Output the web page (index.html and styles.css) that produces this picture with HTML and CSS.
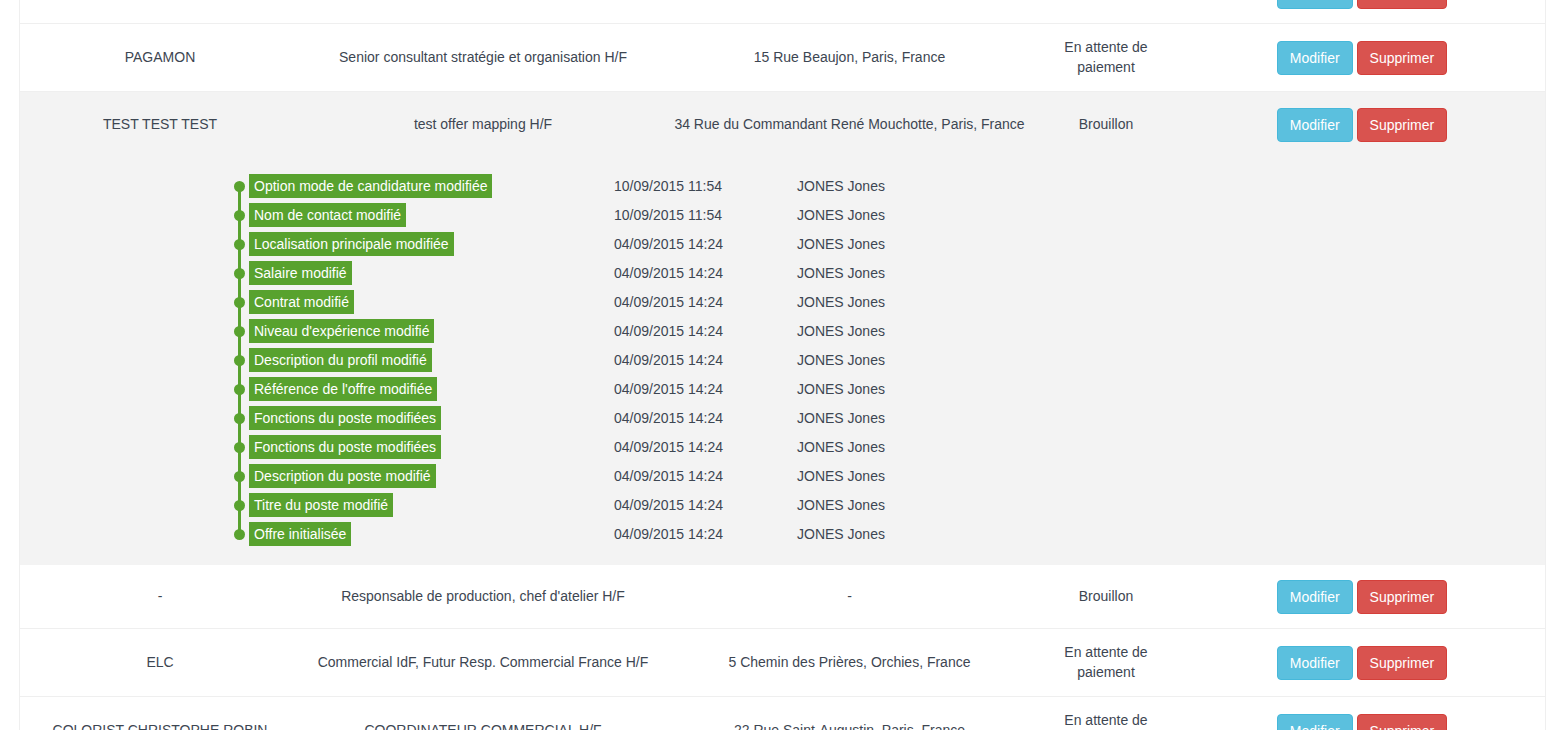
FILE: index.html
```html
<!DOCTYPE html>
<html lang="fr">
<head>
<meta charset="utf-8">
<title>Offres</title>
<link rel="stylesheet" href="styles.css">
</head>
<body>
<div class="list">
  <div class="row">
    <div class="cell">ACME</div>
    <div class="cell">Chargé de recrutement H/F</div>
    <div class="cell">10 Rue de Rivoli, Paris, France</div>
    <div class="cell">Publiée</div>
    <div class="cell"><div class="actions"><a class="btn btn-info">Modifier</a><a class="btn btn-danger">Supprimer</a></div></div>
  </div>
  <div class="row">
    <div class="cell">PAGAMON</div>
    <div class="cell">Senior consultant stratégie et organisation H/F</div>
    <div class="cell">15 Rue Beaujon, Paris, France</div>
    <div class="cell">En attente de paiement</div>
    <div class="cell"><div class="actions"><a class="btn btn-info">Modifier</a><a class="btn btn-danger">Supprimer</a></div></div>
  </div>
  <div class="row-group active">
    <div class="row no-border">
      <div class="cell">TEST TEST TEST</div>
      <div class="cell">test offer mapping H/F</div>
      <div class="cell">34 Rue du Commandant René Mouchotte, Paris, France</div>
      <div class="cell">Brouillon</div>
      <div class="cell"><div class="actions"><a class="btn btn-info">Modifier</a><a class="btn btn-danger">Supprimer</a></div></div>
    </div>
    <div class="history">
      <div class="tl-item"><span class="tl-marker"></span><span class="tl-label-cell"><span class="tl-label">Option mode de candidature modifiée</span></span><span class="tl-date">10/09/2015 11:54</span><span class="tl-user">JONES Jones</span></div>
      <div class="tl-item"><span class="tl-marker"></span><span class="tl-label-cell"><span class="tl-label">Nom de contact modifié</span></span><span class="tl-date">10/09/2015 11:54</span><span class="tl-user">JONES Jones</span></div>
      <div class="tl-item"><span class="tl-marker"></span><span class="tl-label-cell"><span class="tl-label">Localisation principale modifiée</span></span><span class="tl-date">04/09/2015 14:24</span><span class="tl-user">JONES Jones</span></div>
      <div class="tl-item"><span class="tl-marker"></span><span class="tl-label-cell"><span class="tl-label">Salaire modifié</span></span><span class="tl-date">04/09/2015 14:24</span><span class="tl-user">JONES Jones</span></div>
      <div class="tl-item"><span class="tl-marker"></span><span class="tl-label-cell"><span class="tl-label">Contrat modifié</span></span><span class="tl-date">04/09/2015 14:24</span><span class="tl-user">JONES Jones</span></div>
      <div class="tl-item"><span class="tl-marker"></span><span class="tl-label-cell"><span class="tl-label">Niveau d'expérience modifié</span></span><span class="tl-date">04/09/2015 14:24</span><span class="tl-user">JONES Jones</span></div>
      <div class="tl-item"><span class="tl-marker"></span><span class="tl-label-cell"><span class="tl-label">Description du profil modifié</span></span><span class="tl-date">04/09/2015 14:24</span><span class="tl-user">JONES Jones</span></div>
      <div class="tl-item"><span class="tl-marker"></span><span class="tl-label-cell"><span class="tl-label">Référence de l'offre modifiée</span></span><span class="tl-date">04/09/2015 14:24</span><span class="tl-user">JONES Jones</span></div>
      <div class="tl-item"><span class="tl-marker"></span><span class="tl-label-cell"><span class="tl-label">Fonctions du poste modifiées</span></span><span class="tl-date">04/09/2015 14:24</span><span class="tl-user">JONES Jones</span></div>
      <div class="tl-item"><span class="tl-marker"></span><span class="tl-label-cell"><span class="tl-label">Fonctions du poste modifiées</span></span><span class="tl-date">04/09/2015 14:24</span><span class="tl-user">JONES Jones</span></div>
      <div class="tl-item"><span class="tl-marker"></span><span class="tl-label-cell"><span class="tl-label">Description du poste modifié</span></span><span class="tl-date">04/09/2015 14:24</span><span class="tl-user">JONES Jones</span></div>
      <div class="tl-item"><span class="tl-marker"></span><span class="tl-label-cell"><span class="tl-label">Titre du poste modifié</span></span><span class="tl-date">04/09/2015 14:24</span><span class="tl-user">JONES Jones</span></div>
      <div class="tl-item"><span class="tl-marker"></span><span class="tl-label-cell"><span class="tl-label">Offre initialisée</span></span><span class="tl-date">04/09/2015 14:24</span><span class="tl-user">JONES Jones</span></div>
    </div>
  </div>
  <div class="row">
    <div class="cell">-</div>
    <div class="cell">Responsable de production, chef d'atelier H/F</div>
    <div class="cell">-</div>
    <div class="cell">Brouillon</div>
    <div class="cell"><div class="actions"><a class="btn btn-info">Modifier</a><a class="btn btn-danger">Supprimer</a></div></div>
  </div>
  <div class="row">
    <div class="cell">ELC</div>
    <div class="cell">Commercial IdF, Futur Resp. Commercial France H/F</div>
    <div class="cell">5 Chemin des Prières, Orchies, France</div>
    <div class="cell">En attente de paiement</div>
    <div class="cell"><div class="actions"><a class="btn btn-info">Modifier</a><a class="btn btn-danger">Supprimer</a></div></div>
  </div>
  <div class="row">
    <div class="cell">COLORIST CHRISTOPHE ROBIN</div>
    <div class="cell">COORDINATEUR COMMERCIAL H/F</div>
    <div class="cell">22 Rue Saint-Augustin, Paris, France</div>
    <div class="cell">En attente de paiement</div>
    <div class="cell"><div class="actions"><a class="btn btn-info">Modifier</a><a class="btn btn-danger">Supprimer</a></div></div>
  </div>
</div>
</body>
</html>
```
FILE: styles.css
```css
html, body {
  margin: 0;
  padding: 0;
  background: #ffffff;
}
body {
  font-family: "Liberation Sans", Arial, sans-serif;
  font-size: 14px;
  line-height: 20px;
  color: #3d4652;
}
.list {
  width: 1525px;
  margin: -40px 0 0 19px;
  border-left: 1px solid #efefef;
  border-right: 1px solid #efefef;
  background: #ffffff;
}
.row {
  display: grid;
  grid-template-columns: 280px 366px 367px 146px 1fr;
  align-items: center;
  border-bottom: 1px solid #efefef;
}
.row.no-border {
  border-bottom: none;
}
.row-group.active {
  background: #f3f3f3;
  border-bottom: 1px solid #f3f3f3;
}
.cell {
  padding: 13px 8px 14px;
  text-align: center;
}
.row-group.active .cell {
  padding-top: 14px;
}
.actions {
  display: flex;
  justify-content: center;
  gap: 4px;
  padding: 2px 0 0;
}
.btn {
  display: block;
  padding: 6px 12px;
  line-height: 20px;
  border: 1px solid transparent;
  border-radius: 4px;
  color: #ffffff;
  font-size: 14px;
  cursor: pointer;
}
.btn-info {
  background: #5bc0de;
  border-color: #46b8da;
}
.btn-danger {
  background: #d9534f;
  border-color: #d43f3a;
}
.history {
  padding: 18px 0 18px 209px;
}
.tl-item {
  display: grid;
  grid-template-columns: 20px 365px 183px auto;
  line-height: 24px;
  margin-bottom: 5px;
}
.tl-item:last-child {
  margin-bottom: 0;
}
.tl-marker {
  position: relative;
}
.tl-marker::before {
  content: "";
  position: absolute;
  left: 9px;
  width: 3px;
  top: 0;
  bottom: -5px;
  background: #58a22e;
}
.tl-item:first-child .tl-marker::before {
  top: 12px;
}
.tl-item:last-child .tl-marker::before {
  bottom: 12px;
}
.tl-marker::after {
  content: "";
  position: absolute;
  left: 5px;
  top: 6.5px;
  width: 11px;
  height: 11px;
  border-radius: 50%;
  background: #58a22e;
}
.tl-label {
  display: inline-block;
  background: #58a22e;
  color: #ffffff;
  padding: 0 5px;
}
```
